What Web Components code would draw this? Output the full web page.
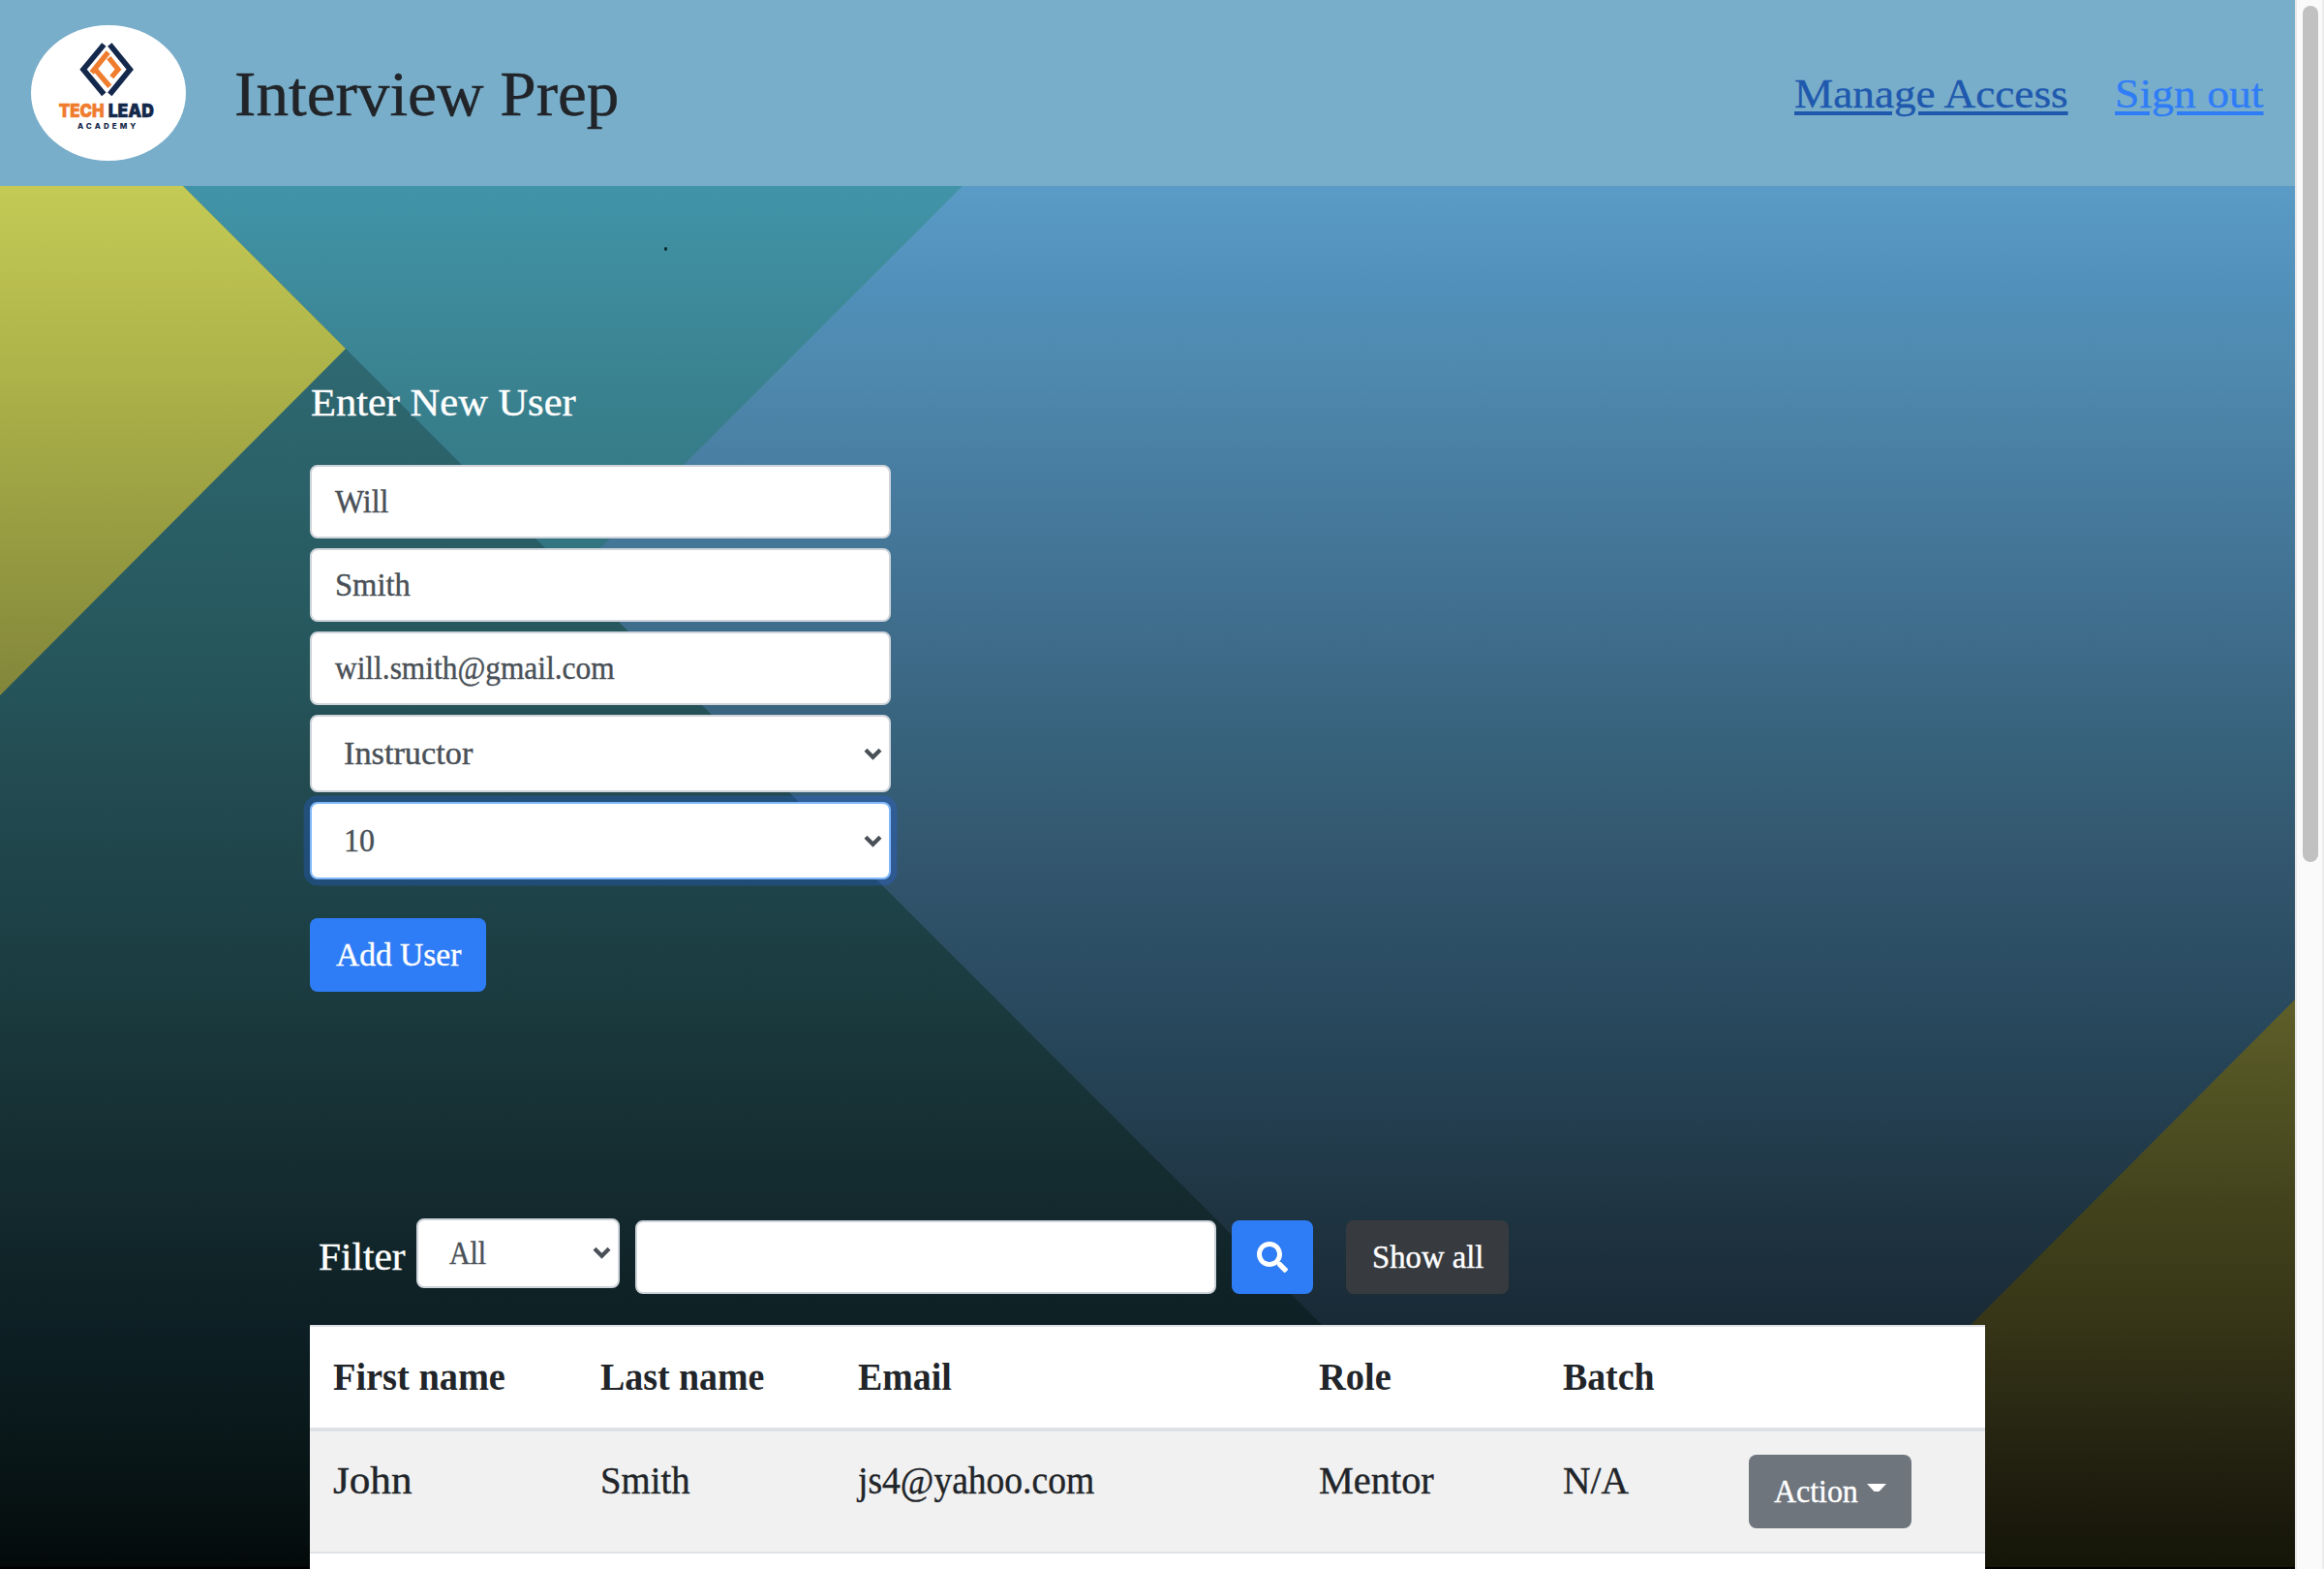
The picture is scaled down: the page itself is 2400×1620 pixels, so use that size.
<!DOCTYPE html>
<html lang="en">
<head>
<meta charset="utf-8">
<title>Interview Prep</title>
<style>
html,body{margin:0;height:1620px;overflow:hidden}
body{font-family:"Liberation Serif","Times New Roman",serif;color:#212529}
</style>
</head>
<body>
<prep-app></prep-app>
<script>
const define = (name, html, after) => {
  const tpl = document.createElement('template');
  tpl.innerHTML = html;
  customElements.define(name, class extends HTMLElement {
    constructor() {
      super();
      this.attachShadow({ mode: 'open' }).append(tpl.content.cloneNode(true));
    }
    connectedCallback() { if (after) after(this); }
  });
};

/* Text run whose letterforms are widened or narrowed to fill the width in "w". */
define('fit-text', `<style>
:host{display:inline-block;white-space:nowrap;-webkit-text-stroke:var(--ink,.4px) currentColor}
span{display:inline-block;transform-origin:0 50%;text-decoration:inherit}
</style><span><slot></slot></span>`, el => {
  const w = +el.getAttribute('w');
  const run = el.shadowRoot.querySelector('span');
  run.style.transform = 'scaleX(' + w / run.offsetWidth + ')';
  el.style.width = w + 'px';
});

define('brand-logo', `<style>:host{display:block;width:160px;height:140px}svg{display:block}</style>
<svg width="160" height="140" viewBox="36 17 480 420">
  <ellipse cx="276" cy="227" rx="240" ry="210" fill="#fff"/>
  <g fill="none" stroke-width="17" stroke="#14284b">
    <path d="M262 77L198 154L262 231"/><path d="M280 77L343 154L280 231"/>
  </g>
  <g fill="none" stroke-width="16" stroke="#f07c2e">
    <path d="M275 101L224 164"/><path d="M233 152L280 207"/><path d="M277 118L306 154L286 178"/>
  </g>
  <g font-family="Inter,Roboto,sans-serif" font-weight="900">
    <text x="122" y="302" font-size="57" fill="#f07c2e" stroke="#f07c2e" stroke-width="1.5" textLength="141" lengthAdjust="spacingAndGlyphs">TECH</text>
    <text x="275" y="302" font-size="57" fill="#14284b" stroke="#14284b" stroke-width="1.5" textLength="142" lengthAdjust="spacingAndGlyphs">LEAD</text>
    <text x="180" y="339" font-size="24" font-weight="800" fill="#14284b" textLength="181">ACADEMY</text>
  </g>
</svg>`);

define('nav-link', `<style>
:host{display:block;font-size:43px;line-height:60px;color:#2f7df6;padding-top:2px}
:host([active]){color:#1f59ae}
::slotted(*){text-decoration:underline 4px;text-underline-offset:4px}
</style><slot></slot>`);

define('top-bar', `<style>
:host{display:flex;align-items:center;height:192px;box-sizing:border-box;padding:0 32px;background:#79aeca}
.title{font-size:65px;line-height:80px;margin:2px 0 0 50px;font-weight:400}
nav{display:flex;gap:48px;margin-left:auto}
</style>
<brand-logo></brand-logo>
<h1 class="title"><fit-text w="397">Interview Prep</fit-text></h1>
<nav>
  <nav-link active><fit-text w="283">Manage Access</fit-text></nav-link>
  <nav-link><fit-text w="154">Sign out</fit-text></nav-link>
</nav>`);

define('back-drop', `<style>:host{display:block}svg{display:block}</style>
<svg width="2370" height="1428" viewBox="0 192 2370 1428">
<defs>
  <linearGradient id="b" gradientUnits="userSpaceOnUse" x1="0" y1="192" x2="0" y2="1620">
    <stop offset="0" stop-color="#5a9bc7"/><stop offset=".08" stop-color="#508fb8"/><stop offset=".134" stop-color="#4f89ae"/><stop offset=".214" stop-color="#477ca0"/><stop offset=".321" stop-color="#3f6d8c"/><stop offset=".402" stop-color="#37627c"/><stop offset=".482" stop-color="#33576f"/><stop offset=".589" stop-color="#294a5f"/><stop offset=".669" stop-color="#243f51"/><stop offset=".75" stop-color="#1e3340"/><stop offset=".823" stop-color="#192a36"/><stop offset="1" stop-color="#080d10"/>
  </linearGradient>
  <linearGradient id="t" gradientUnits="userSpaceOnUse" x1="0" y1="192" x2="0" y2="600">
    <stop offset="0" stop-color="#4194a8"/><stop offset=".5" stop-color="#3a8290"/><stop offset="1" stop-color="#30717d"/>
  </linearGradient>
  <linearGradient id="y" gradientUnits="userSpaceOnUse" x1="0" y1="192" x2="0" y2="718">
    <stop offset="0" stop-color="#c4ca55"/><stop offset=".33" stop-color="#b0b54a"/><stop offset="1" stop-color="#82863a"/>
  </linearGradient>
  <linearGradient id="d" gradientUnits="userSpaceOnUse" x1="0" y1="360" x2="0" y2="1620">
    <stop offset="0" stop-color="#2f6972"/><stop offset=".27" stop-color="#25555b"/><stop offset=".34" stop-color="#234c52"/><stop offset=".456" stop-color="#1d4247"/><stop offset=".549" stop-color="#1a393d"/><stop offset=".643" stop-color="#162f33"/><stop offset=".736" stop-color="#11262a"/><stop offset=".829" stop-color="#0c1d22"/><stop offset=".9" stop-color="#091718"/><stop offset=".968" stop-color="#060f10"/><stop offset="1" stop-color="#030909"/>
  </linearGradient>
  <linearGradient id="o" gradientUnits="userSpaceOnUse" x1="0" y1="1032" x2="0" y2="1620">
    <stop offset="0" stop-color="#5e5f29"/><stop offset=".36" stop-color="#42431c"/><stop offset=".57" stop-color="#363517"/><stop offset=".8" stop-color="#232211"/><stop offset="1" stop-color="#141408"/>
  </linearGradient>
</defs>
<path fill="url(#b)" d="M0 192H2370V1620H0z"/>
<path fill="url(#t)" d="M180 192H994L591 595z"/>
<path fill="url(#d)" d="M0 192H189L1617 1620H0z"/>
<path fill="url(#y)" d="M0 192H189L357 360L0 718z"/>
<path fill="url(#o)" d="M2370 1032V1620H1784z"/>
<path fill="#000" d="M0 1618H2370V1620H0z"/>
<ellipse cx="687.5" cy="257" rx="1.6" ry="2" fill="#0c2a30"/>
</svg>`);

define('form-field', `<style>
:host{display:flex;align-items:center;box-sizing:border-box;width:600px;height:76px;padding:0 24px 1px;background:#fff;border:2px solid #ced4da;border-radius:8px;font-size:33px;line-height:40px;color:#495057}
</style><slot></slot>`);

define('select-field', `<style>
:host{display:flex;align-items:center;justify-content:space-between;box-sizing:border-box;width:600px;height:80px;padding:0 7px 0 33px;background:#fff;border:2px solid #ced4da;border-radius:8px;font-size:33px;line-height:40px;color:#495057}
:host([focused]){border-color:#80b8fb;box-shadow:0 0 0 6.4px rgba(40,100,240,.28)}
:host([compact]){width:210px;height:72px;padding-left:32px;padding-bottom:1px}
svg{display:block;margin-top:0}
</style><slot></slot>
<svg width="19" height="13" viewBox="0 0 19 13"><path d="M2 2.2L9.5 9.8L17 2.2" fill="none" stroke="#495057" stroke-width="4.2"/></svg>`);

define('push-button', `<style>
:host{display:flex;align-items:center;justify-content:center;box-sizing:border-box;width:max-content;height:76px;padding:0 26px 1px;border-radius:8px;background:#2f7df6;color:#fff;font-size:33px;line-height:40px}
:host([dark]){background:#373b3f}
:host([muted]){background:#6e757d}
</style><slot></slot>`);

define('user-form', `<style>
:host{display:flex;flex-direction:column;gap:10px;align-items:flex-start}
h2{margin:1px 0 29px 1px;font-size:40px;line-height:50px;font-weight:400;color:#fff}
push-button{margin-top:30px;width:182px}
</style>
<h2><fit-text w="274">Enter New User</fit-text></h2>
<form-field><fit-text w="55">Will</fit-text></form-field>
<form-field><fit-text w="78">Smith</fit-text></form-field>
<form-field><fit-text w="289">will.smith@gmail.com</fit-text></form-field>
<select-field><fit-text w="133">Instructor</fit-text></select-field>
<select-field focused><fit-text w="32">10</fit-text></select-field>
<push-button><fit-text w="129">Add User</fit-text></push-button>`);

define('filter-bar', `<style>
:host{display:flex;align-items:flex-start;height:110px;padding-left:9px}
.label{font-size:40px;line-height:50px;color:#fff;width:101px;margin-top:15px}
form-field,push-button{margin-top:2px}
form-field{margin-left:16px}
.search{width:84px;margin-left:16px}
.all{width:168px;margin-left:34px}
svg{display:block}
</style>
<span class="label"><fit-text w="90">Filter</fit-text></span>
<select-field compact><fit-text w="38">All</fit-text></select-field>
<form-field></form-field>
<push-button class="search"><svg width="32" height="32" viewBox="0 0 512 512"><path fill="#fff" d="M505 442.700L405.300 343c-4.500-4.500-10.600-7-17-7H372c27.600-35.300 44-79.700 44-128C416 93.100 322.900 0 208 0S0 93.100 0 208s93.100 208 208 208c48.300 0 92.700-16.400 128-44v16.300c0 6.400 2.500 12.500 7 17l99.700 99.700c9.400 9.400 24.600 9.400 33.900 0l28.300-28.300c9.400-9.400 9.400-24.600.1-34zM208 336c-70.700 0-128-57.200-128-128 0-70.700 57.200-128 128-128 70.700 0 128 57.200 128 128 0 70.700-57.200 128-128 128z"/></svg></push-button>
<push-button class="all" dark><fit-text w="115">Show all</fit-text></push-button>`);

define('user-table', `<style>
:host{display:block;width:1730px;background:#fff;font-size:40px;line-height:50px}
.row{display:grid;grid-template-columns:276px 266px 476px 252px 192px 268px;box-sizing:border-box;border-top:2px solid #dee2e6}
.row>span{padding-left:24px}
.head{--ink:0px;height:110px;border-bottom:4px solid #dee2e6;font-weight:700;padding-top:27px;font-size:39px}
.body{height:124px;border-top:0;background:#f1f1f1;padding-top:26px}
.next{height:18px}
push-button{width:168px;margin-top:-2px;justify-content:flex-start;padding-right:0}
svg{margin:-8px 0 0 9px}
</style>
<div class="row head">
  <span><fit-text w="178">First name</fit-text></span><span><fit-text w="169">Last name</fit-text></span><span><fit-text w="97">Email</fit-text></span><span><fit-text w="75">Role</fit-text></span><span><fit-text w="95">Batch</fit-text></span><span></span>
</div>
<div class="row body">
  <span><fit-text w="82">John</fit-text></span><span><fit-text w="93">Smith</fit-text></span><span><fit-text w="244">js4@yahoo.com</fit-text></span><span><fit-text w="119">Mentor</fit-text></span><span><fit-text w="68">N/A</fit-text></span>
  <span><push-button muted><fit-text w="87">Action</fit-text><svg width="20" height="8" viewBox="0 0 20 8"><path fill="#fff" d="M0 0H20L12.500 8H7.500z"/></svg></push-button></span>
</div>
<div class="row next"></div>`);

define('scroll-track', `<style>
:host{display:block;box-sizing:border-box;width:30px;height:1620px;padding:6px 4px 0 6px;background:#fafafa;border-left:2px solid #e8e8e8;border-right:2px solid #ececec}
div{width:16px;height:884px;border-radius:8px;background:#c1c1c1}
</style><div></div>`);

define('prep-app', `<style>
:host{display:flex;height:1620px;overflow:hidden}
.page{width:2370px}
main{display:grid;height:1428px;overflow:hidden}
back-drop,.content{grid-area:1/1}
.content{padding:198px 320px 0;z-index:1}
filter-bar{margin-top:234px}
</style>
<div class="page">
  <top-bar></top-bar>
  <main>
    <back-drop></back-drop>
    <div class="content"><user-form></user-form><filter-bar></filter-bar><user-table></user-table></div>
  </main>
</div>
<scroll-track></scroll-track>`);
</script>
</body>
</html>
